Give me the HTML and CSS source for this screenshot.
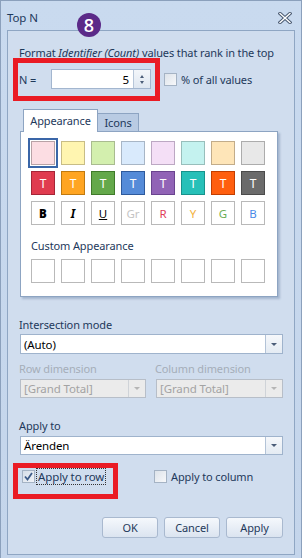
FILE: index.html
```html
<!DOCTYPE html>
<html>
<head>
<meta charset="utf-8">
<link rel="stylesheet" href="styles.css">
</head>
<body>
<div class="window">
  <div class="titlebar">
    <span class="title">Top N</span>
    <svg class="close" width="14" height="12" viewBox="0 0 14 12">
      <path d="M2 1.5 L12 10.5 M12 1.5 L2 10.5" stroke="#4a5a72" stroke-width="3.4" stroke-linecap="square"/>
      <path d="M2 1.5 L12 10.5 M12 1.5 L2 10.5" stroke="#ffffff" stroke-width="1.4" stroke-linecap="square"/>
    </svg>
  </div>
  <div class="badge">8</div>
  <div class="client">
    <p class="intro">Format <i>Identifier (Count)</i> values that rank in the top</p>
    <div class="nrow">
      <span class="nlabel">N =</span>
      <div class="spin">
        <span class="spin-val">5</span>
        <span class="spin-btn"><span class="up"></span><span class="down"></span></span>
      </div>
      <span class="check"></span>
      <span class="clabel">% of all values</span>
    </div>

    <div class="tabs">
      <span class="tab active">Appearance</span>
      <span class="tab">Icons</span>
    </div>
    <div class="panel">
      <div class="grid">
        <span class="sw sel"><span class="in" style="background:#fcdde3;border-color:#b8a2a6"></span></span>
        <span class="sw" style="background:#fff5b0;border-color:#c8bd86"></span>
        <span class="sw" style="background:#d3efae;border-color:#a9bb90"></span>
        <span class="sw" style="background:#d9eafc;border-color:#a8b6c6"></span>
        <span class="sw" style="background:#f4dff6;border-color:#bca8c3"></span>
        <span class="sw" style="background:#c4f2ef;border-color:#98bebb"></span>
        <span class="sw" style="background:#fee5b8;border-color:#c2ac8a"></span>
        <span class="sw" style="background:#e8e8e8;border-color:#acacac"></span>

        <span class="sw t" style="background:#e03b4f;border-color:#a52537">T</span>
        <span class="sw t" style="background:#ffa522;border-color:#c07a10">T</span>
        <span class="sw t" style="background:#64a84a;border-color:#3f7a2a">T</span>
        <span class="sw t" style="background:#558bd8;border-color:#2e5a9c">T</span>
        <span class="sw t" style="background:#9163b6;border-color:#6a448f">T</span>
        <span class="sw t" style="background:#27c0b8;border-color:#17928b">T</span>
        <span class="sw t" style="background:#ff5f0f;border-color:#c23e00">T</span>
        <span class="sw t" style="background:#6b6b6b;border-color:#4b4b4b">T</span>

        <span class="sw f"><b>B</b></span>
        <span class="sw f"><i class="it">I</i></span>
        <span class="sw f"><u>U</u></span>
        <span class="sw f" style="color:#c4c4c4">Gr</span>
        <span class="sw f" style="color:#e0405a">R</span>
        <span class="sw f" style="color:#f3b33f">Y</span>
        <span class="sw f" style="color:#6aae55">G</span>
        <span class="sw f" style="color:#4a8ae8">B</span>
      </div>
      <div class="custom-label">Custom Appearance</div>
      <div class="grid">
        <span class="sw"></span><span class="sw"></span><span class="sw"></span><span class="sw"></span>
        <span class="sw"></span><span class="sw"></span><span class="sw"></span><span class="sw"></span>
      </div>
    </div>

    <div class="label l-inter">Intersection mode</div>
    <div class="combo"><span class="cval">(Auto)</span><span class="cbtn"><span class="arr"></span></span></div>

    <div class="dims">
      <div class="dim">
        <div class="label dis">Row dimension</div>
        <div class="combo disabled"><span class="cval">[Grand Total]</span><span class="cbtn"><span class="arr"></span></span></div>
      </div>
      <div class="dim">
        <div class="label dis">Column dimension</div>
        <div class="combo disabled"><span class="cval">[Grand Total]</span><span class="cbtn"><span class="arr"></span></span></div>
      </div>
    </div>

    <div class="label l-apply">Apply to</div>
    <div class="combo c-apply"><span class="cval">Ärenden</span><span class="cbtn"><span class="arr"></span></span></div>

    <div class="applyrow">
      <div class="ap ap1">
        <span class="check checked"><svg width="11" height="11" viewBox="0 0 11 11"><path d="M2 5.5 L4.5 8.5 L9 2" fill="none" stroke="#3d5b88" stroke-width="1.8"/></svg></span>
        <span class="clabel focus">Apply to row</span>
      </div>
      <div class="ap ap2">
        <span class="check"></span>
        <span class="clabel">Apply to column</span>
      </div>
    </div>

    <div class="buttons">
      <span class="btn">OK</span>
      <span class="btn">Cancel</span>
      <span class="btn wide">Apply</span>
    </div>
  </div>
  <div class="hl hl1"></div>
  <div class="hl hl2"></div>
</div>
</body>
</html>
```
FILE: styles.css
```css
* { box-sizing: border-box; }
html, body { margin: 0; padding: 0; }
body {
  font-family: "Noto Sans", "Open Sans", sans-serif;
  font-size: 11px;
  letter-spacing: -0.12px;
  color: #1e395b;
  background: #c8d8ee;
}
.window {
  position: relative;
  width: 302px;
  height: 558px;
  background: linear-gradient(#c9daef, #c4d5eb);
  border: 1px solid #8ba0bc;
  border-bottom: none;
}
.titlebar {
  height: 29px;
  display: flex;
  align-items: center;
  justify-content: space-between;
  padding: 4px 9px 0 6px;
}
.title { font-size: 11.5px; color: #1e395b; }
.badge {
  position: absolute;
  left: 76px;
  top: 12px;
  width: 24px;
  height: 24px;
  border-radius: 50%;
  background: #5b2a88;
  color: #fff;
  font-family: "Open Sans", sans-serif;
  font-weight: 600;
  font-size: 18px;
  letter-spacing: 0;
  line-height: 24px;
  text-align: center;
}
.client {
  margin: 0 6px 0 6px;
  height: 525px;
  background: #d0ddee;
  border: 1px solid #8fa6c3;
  padding: 0 12px 0 11px;
}
.intro {
  margin: 14px 0 0 0;
  line-height: 16px;
  white-space: nowrap;
}
.nrow {
  margin-top: 8px;
  height: 20px;
  display: flex;
  align-items: center;
}
.nlabel { width: 32px; }
.spin {
  width: 100px;
  height: 20px;
  background: #fff;
  border: 1px solid #a3b6cf;
  display: flex;
  align-items: center;
  justify-content: flex-end;
}
.spin-val { color: #000; padding-right: 4px; font-size: 11.5px; }
.spin-btn {
  width: 17px;
  height: 18px;
  border-left: 1px solid #b7c6d9;
  background: linear-gradient(#f3f6fa, #dfe7f1);
  display: flex;
  flex-direction: column;
  align-items: center;
  justify-content: center;
  gap: 3px;
}
.up, .down { width: 0; height: 0; border-left: 2.5px solid transparent; border-right: 2.5px solid transparent; }
.up { border-bottom: 3px solid #4b5d78; }
.down { border-top: 3px solid #4b5d78; }
.check {
  width: 13px;
  height: 13px;
  border: 1px solid #a5b3c4;
  background: linear-gradient(135deg, #dde3ea, #f7f8fa);
  margin-left: 13px;
  display: inline-flex;
  align-items: center;
  justify-content: center;
}
.clabel { margin-left: 4px; }

.tabs {
  margin-top: 20px;
  margin-left: 4px;
  display: flex;
  align-items: flex-end;
  height: 22px;
  position: relative;
  z-index: 1;
}
.tab {
  height: 18px;
  border: 1px solid #8da4c2;
  border-bottom: none;
  background: #b9cbe3;
  line-height: 17px;
  margin-left: -1px;
  width: 42px;
  text-align: center;
}
.tab.active {
  height: 23px;
  width: 75px;
  background: #fff;
  line-height: 21px;
  margin-left: 0;
  margin-bottom: -1px;
}
.panel {
  margin-left: 1px;
  width: 258px;
  height: 166px;
  background: #fff;
  border: 1px solid #8da4c2;
  box-shadow: 2px 2px 2px rgba(80, 110, 150, 0.35);
  padding: 9px 0 0 10px;
}
.grid {
  display: grid;
  grid-template-columns: repeat(8, 24px);
  grid-auto-rows: 24px;
  gap: 6px;
}
.sw {
  width: 24px;
  height: 24px;
  border: 1px solid #b9b9b9;
  background: #fff;
  display: flex;
  align-items: center;
  justify-content: center;
  font-size: 11px;
  letter-spacing: 0;
}
.sw.sel {
  border: 2px solid #3a66a8;
  margin: -3px;
  width: 30px;
  height: 30px;
  padding: 1px;
}
.sw .in { display: block; width: 24px; height: 24px; border: 1px solid; }
.sw.t { color: #fff; font-size: 12px; }
.sw.f { font-size: 11.5px; color: #000; }
.sw.f b { font-weight: 900; }
.sw.f .it { font-style: italic; font-weight: 700; }
.custom-label { margin-top: 13px; line-height: 16px; }
.custom-label + .grid { margin-top: 5px; }

.label { line-height: 14px; }
.label.dis { color: #a5aeb9; }
.l-inter { margin-top: 21px; }
.combo {
  margin-top: 2px;
  height: 20px;
  background: #fff;
  border: 1px solid #9fb3cc;
  display: flex;
  align-items: center;
  justify-content: space-between;
  margin-left: 1px;
  margin-right: -1px;
}
.cval { padding-left: 3px; color: #000; font-size: 11.5px; }
.cbtn {
  width: 17px;
  height: 18px;
  border-left: 1px solid #b3c3d7;
  background: linear-gradient(#f6f8fb, #e4ebf3);
  display: flex;
  align-items: center;
  justify-content: center;
}
.arr { width: 0; height: 0; border-left: 3px solid transparent; border-right: 3px solid transparent; border-top: 3px solid #4b5d78; }
.combo.disabled { background: #ebebeb; border-color: #b7bec8; height: 19px; margin-top: 3px; }
.combo.disabled .cval { color: #a3a3a3; }
.combo.disabled .cbtn { background: #ebebeb; border-left-color: #cfd3d8; height: 17px; }
.combo.disabled .arr { border-top-color: #b5b5b5; }
.dims {
  margin-top: 8px;
  display: flex;
  justify-content: space-between;
}
.dim { width: 127px; }
.dim:first-child .combo { margin-right: 0; }
.l-apply { margin-top: 21px; }
.combo.c-apply { margin-top: 3px; height: 19px; }
.combo.c-apply .cbtn { height: 17px; }
.applyrow {
  margin-top: 13px;
  display: flex;
  height: 17px;
  align-items: center;
}
.ap { display: flex; align-items: center; }
.ap1 { width: 135px; }
.ap .check { margin-left: 3px; }
.ap2 .check { margin-left: 0; }
.check.checked { background: linear-gradient(135deg, #d6dee8, #f1f4f8); }
.clabel.focus {
  outline: 1px dotted #333;
  padding: 0 1px;
  margin-left: 2px;
  line-height: 15px;
  font-size: 11.5px;
}
.buttons {
  margin-top: 32px;
  display: flex;
  justify-content: flex-end;
  gap: 6px;
  margin-right: -1px;
}
.btn {
  width: 56px;
  height: 21px;
  border: 1px solid #a9b9cf;
  border-radius: 3px;
  background: linear-gradient(#f5f8fc, #dbe4f0);
  text-align: center;
  line-height: 19px;
}
.btn.wide { width: 57px; }
.hl {
  position: absolute;
  border: 5px solid #ea1b24;
}
.hl1 { left: 12px; top: 57px; width: 147px; height: 43px; }
.hl2 { left: 12px; top: 462px; width: 105px; height: 36px; }
```
